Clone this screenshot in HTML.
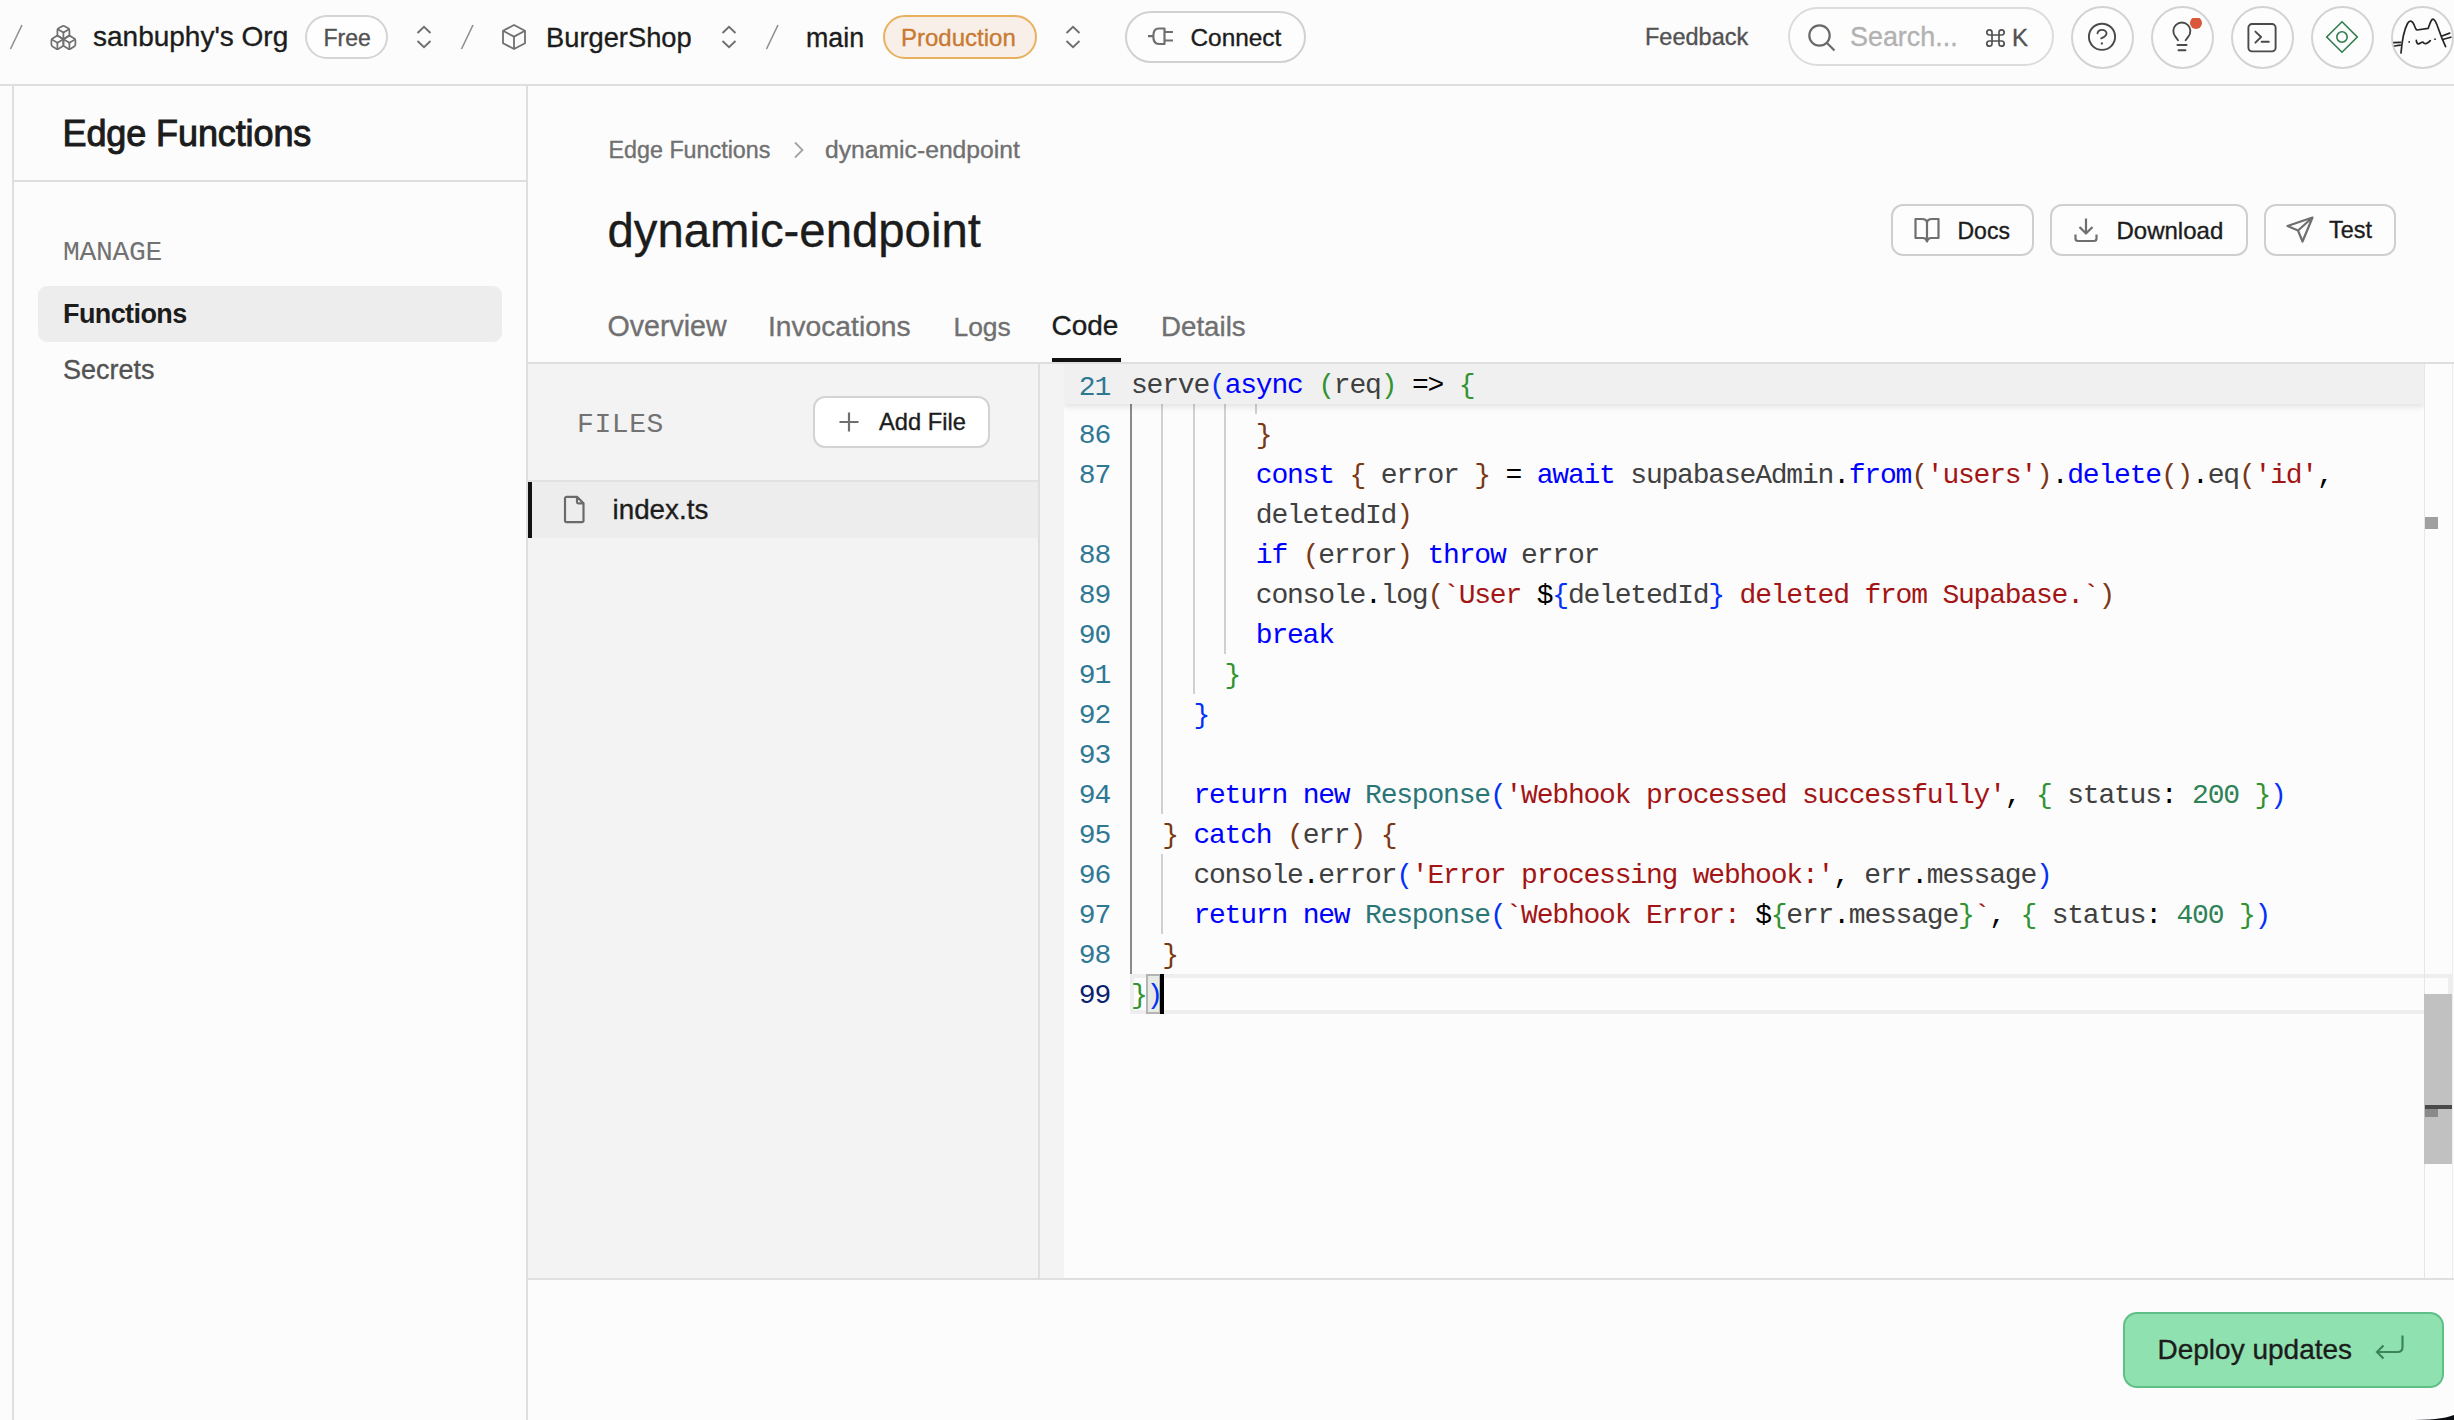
<!DOCTYPE html>
<html><head><meta charset="utf-8"><title>Edge Functions - dynamic-endpoint</title>
<style>html,body{margin:0;padding:0;}body{width:2454px;height:1420px;position:relative;overflow:hidden;background:#fcfcfc;font-family:'Liberation Sans', sans-serif;}</style>
</head><body>
<div style="position:absolute;left:0px;top:84px;width:2454px;height:2px;box-sizing:border-box;background:#dfdfdf"></div>
<svg style="position:absolute;left:8px;top:24px" width="16" height="26" viewBox="0 0 16 26" fill="none"><line x1="2.5" y1="25" x2="14" y2="1" stroke="#8f8f8f" stroke-width="1.6"/></svg>
<svg style="position:absolute;left:48.6px;top:22.5px" width="28.8" height="28.8" viewBox="0 0 24 24" fill="none" stroke="#6f6f6f" stroke-width="1.45" stroke-linecap="round" stroke-linejoin="round"><path d="M2.97 12.92A2 2 0 0 0 2 14.63v3.24a2 2 0 0 0 .97 1.71l3 1.8a2 2 0 0 0 2.06 0L12 19v-5.5l-5-3-4.03 2.42Z"/><path d="m7 16.5-4.74-2.85"/><path d="m7 16.5 5-3"/><path d="M7 16.5v5.17"/><path d="M12 13.5V19l3.97 2.38a2 2 0 0 0 2.06 0l3-1.8a2 2 0 0 0 .97-1.71v-3.24a2 2 0 0 0-.97-1.71L17 10.5l-5 3Z"/><path d="m17 16.5-5-3"/><path d="m17 16.5 4.74-2.85"/><path d="M17 16.5v5.17"/><path d="M7.97 4.42A2 2 0 0 0 7 6.13v4.37l5 3 5-3V6.13a2 2 0 0 0-.97-1.71l-3-1.8a2 2 0 0 0-2.06 0l-3 1.8Z"/><path d="M12 8 7.26 5.15"/><path d="m12 8 4.74-2.85"/><path d="M12 13.5V8"/></svg>
<div style="position:absolute;left:93px;top:22.99px;font-family:'Liberation Sans', sans-serif;font-size:28px;line-height:28px;font-weight:400;color:#1c1c1c;letter-spacing:0px;white-space:pre;-webkit-text-stroke:0.35px #1c1c1c;">sanbuphy&#x27;s Org</div>
<div style="position:absolute;left:305px;top:15px;width:83px;height:44px;box-sizing:border-box;border:2px solid #d4d4d4;border-radius:22px;background:#fefefe"></div>
<div style="position:absolute;left:323.5px;top:26.53px;font-family:'Liberation Sans', sans-serif;font-size:23px;line-height:23px;font-weight:400;color:#525252;letter-spacing:0px;white-space:pre;-webkit-text-stroke:0.35px #525252;">Free</div>
<svg style="position:absolute;left:415px;top:25px" width="18" height="24" viewBox="0 0 18 24" fill="none"><path d="M2.5 8 L9 1.8 L15.5 8 M2.5 16 L9 22.2 L15.5 16" stroke="#6f6f6f" stroke-width="1.9" fill="none"/></svg>
<svg style="position:absolute;left:457px;top:24px" width="20" height="26" viewBox="0 0 20 26" fill="none"><line x1="4.5" y1="25" x2="16" y2="1" stroke="#8f8f8f" stroke-width="1.6"/></svg>
<svg style="position:absolute;left:500px;top:23px" width="28" height="28" viewBox="0 0 28 28" fill="none"><path d="M14 2 L25 7.8 L25 20.2 L14 26 L3 20.2 L3 7.8 Z M3 7.8 L14 13.6 L25 7.8 M14 13.6 L14 26" stroke="#707070" stroke-width="1.8" stroke-linejoin="round"/></svg>
<div style="position:absolute;left:546px;top:24.09px;font-family:'Liberation Sans', sans-serif;font-size:27.3px;line-height:27.3px;font-weight:400;color:#1c1c1c;letter-spacing:0px;white-space:pre;-webkit-text-stroke:0.35px #1c1c1c;">BurgerShop</div>
<svg style="position:absolute;left:720px;top:25px" width="18" height="24" viewBox="0 0 18 24" fill="none"><path d="M2.5 8 L9 1.8 L15.5 8 M2.5 16 L9 22.2 L15.5 16" stroke="#6f6f6f" stroke-width="1.9" fill="none"/></svg>
<svg style="position:absolute;left:762px;top:24px" width="20" height="26" viewBox="0 0 20 26" fill="none"><line x1="4.5" y1="25" x2="16" y2="1" stroke="#8f8f8f" stroke-width="1.6"/></svg>
<div style="position:absolute;left:806px;top:24.51px;font-family:'Liberation Sans', sans-serif;font-size:26.8px;line-height:26.8px;font-weight:400;color:#1c1c1c;letter-spacing:0px;white-space:pre;-webkit-text-stroke:0.35px #1c1c1c;">main</div>
<div style="position:absolute;left:883px;top:15px;width:154px;height:44px;box-sizing:border-box;border:2px solid #e9b15f;border-radius:22px;background:#f8efe8"></div>
<div style="position:absolute;left:901px;top:25.68px;font-family:'Liberation Sans', sans-serif;font-size:24px;line-height:24px;font-weight:400;color:#c87a32;letter-spacing:0px;white-space:pre;-webkit-text-stroke:0.35px #c87a32;">Production</div>
<svg style="position:absolute;left:1064px;top:25px" width="18" height="24" viewBox="0 0 18 24" fill="none"><path d="M2.5 8 L9 1.8 L15.5 8 M2.5 16 L9 22.2 L15.5 16" stroke="#6f6f6f" stroke-width="1.9" fill="none"/></svg>
<div style="position:absolute;left:1125px;top:11px;width:181px;height:52px;box-sizing:border-box;border:2px solid #d1d1d1;border-radius:26px;background:#fdfdfd"></div>
<svg style="position:absolute;left:1146px;top:27px" width="30" height="20" viewBox="0 0 30 20" fill="none"><path d="M2 9.2 H7 M7.3 9.2 C7.3 4 9 1.5 13 1.5 H18.5 V17 H13 C9 17 7.3 14.5 7.3 9.2 Z M18.5 5 H27 M18.5 13.5 H27" stroke="#6f6f6f" stroke-width="2.2" stroke-linejoin="round"/></svg>
<div style="position:absolute;left:1190.5px;top:25.54px;font-family:'Liberation Sans', sans-serif;font-size:24.4px;line-height:24.4px;font-weight:400;color:#1c1c1c;letter-spacing:0px;white-space:pre;-webkit-text-stroke:0.35px #1c1c1c;">Connect</div>
<div style="position:absolute;left:1645px;top:26.40px;font-family:'Liberation Sans', sans-serif;font-size:23.5px;line-height:23.5px;font-weight:400;color:#525252;letter-spacing:0px;white-space:pre;-webkit-text-stroke:0.35px #525252;">Feedback</div>
<div style="position:absolute;left:1788px;top:7px;width:266px;height:59px;box-sizing:border-box;border:2px solid #dcdcdc;border-radius:30px;background:#fdfdfd"></div>
<svg style="position:absolute;left:1806px;top:22px" width="32" height="30" viewBox="0 0 32 30" fill="none"><circle cx="13.5" cy="13.5" r="10.2" stroke="#6a6a6a" stroke-width="2.2"/><line x1="21" y1="21" x2="28.5" y2="28.5" stroke="#6a6a6a" stroke-width="2.2"/></svg>
<div style="position:absolute;left:1850px;top:24.22px;font-family:'Liberation Sans', sans-serif;font-size:26.9px;line-height:26.9px;font-weight:400;color:#b2b2b2;letter-spacing:0px;white-space:pre;-webkit-text-stroke:0.35px #b2b2b2;">Search...</div>
<svg style="position:absolute;left:1985px;top:28px" width="22" height="20" viewBox="0 0 22 20" fill="none"><path d="M7 7 V4.3 A2.6 2.6 0 1 0 4.3 7 H16.7 A2.6 2.6 0 1 0 14 4.3 V15.7 A2.6 2.6 0 1 0 16.7 13 H4.3 A2.6 2.6 0 1 0 7 15.7 Z" stroke="#525252" stroke-width="1.7" fill="none"/></svg>
<div style="position:absolute;left:2012px;top:25.98px;font-family:'Liberation Sans', sans-serif;font-size:24px;line-height:24px;font-weight:400;color:#525252;letter-spacing:0px;white-space:pre;-webkit-text-stroke:0.35px #525252;">K</div>
<div style="position:absolute;left:2070.5px;top:5.5px;width:63px;height:63px;box-sizing:border-box;border:2px solid #d3d3d3;border-radius:50%;background:#fdfdfd"></div>
<div style="position:absolute;left:2150.5px;top:5.5px;width:63px;height:63px;box-sizing:border-box;border:2px solid #d3d3d3;border-radius:50%;background:#fdfdfd"></div>
<div style="position:absolute;left:2230.5px;top:5.5px;width:63px;height:63px;box-sizing:border-box;border:2px solid #d3d3d3;border-radius:50%;background:#fdfdfd"></div>
<div style="position:absolute;left:2310.5px;top:5.5px;width:63px;height:63px;box-sizing:border-box;border:2px solid #d3d3d3;border-radius:50%;background:#fdfdfd"></div>
<div style="position:absolute;left:2390.5px;top:5.5px;width:63px;height:63px;box-sizing:border-box;border:2px solid #d3d3d3;border-radius:50%;background:#fdfdfd"></div>
<svg style="position:absolute;left:2086px;top:21px" width="32" height="32" viewBox="0 0 32 32" fill="none"><circle cx="16" cy="15.8" r="13.1" stroke="#4a4a4a" stroke-width="1.9"/><path d="M11.5 12.4 C11.9 10.1 13.7 8.9 16 8.9 C18.6 8.9 20.5 10.5 20.5 12.6 C20.5 15 17.9 16.3 15.2 17.3" stroke="#4a4a4a" stroke-width="1.9" stroke-linecap="round"/><circle cx="15.9" cy="22.5" r="1.15" fill="#4a4a4a"/></svg>
<svg style="position:absolute;left:2168px;top:18px" width="40" height="36" viewBox="0 0 40 36" fill="none"><path d="M10 22.2 L7.4 18.6 A8.5 8.5 0 1 1 20.3 18.6 L17.6 22.2" stroke="#4a4a4a" stroke-width="1.9" fill="none" stroke-linecap="round"/><path d="M9.4 27 H18.6 M10.5 32.3 H17.5" stroke="#4a4a4a" stroke-width="1.9" stroke-linecap="round"/><circle cx="28" cy="5" r="6" fill="#d9573a"/></svg>
<svg style="position:absolute;left:2246px;top:21px" width="32" height="32" viewBox="0 0 32 32" fill="none"><rect x="2.4" y="3" width="27.2" height="27.4" rx="3.6" stroke="#4a4a4a" stroke-width="1.9"/><path d="M9.4 10.6 L15.1 16 L9.4 21.7" stroke="#4a4a4a" stroke-width="1.9" stroke-linecap="round" stroke-linejoin="round"/><path d="M15.6 20.8 H22.8" stroke="#4a4a4a" stroke-width="1.9" stroke-linecap="round"/></svg>
<svg style="position:absolute;left:2324px;top:19px" width="36" height="36" viewBox="0 0 36 36" fill="none"><path d="M18 2.8 L33.3 18 L18 33.2 L2.7 18 Z" stroke="#2f7d4d" stroke-width="1.6"/><circle cx="18" cy="18" r="5.2" stroke="#2f7d4d" stroke-width="1.6"/></svg>
<div style="position:absolute;left:2390px;top:5.5px;width:63px;height:63px;border-radius:50%;overflow:hidden">
<svg width="63" height="63" viewBox="0 0 63 63" style="position:absolute;left:0;top:0" fill="none" stroke="#262626" stroke-width="1.7" stroke-linecap="round" stroke-linejoin="round"><path d="M11 47 C11.8 37 13.5 25 17.5 17.5 C19.5 14 22 14.5 24 18.5 C25 21 25.5 23.5 27 24 L38.2 22.4 C39.5 19 40.5 14.5 42.5 13.2 C44.5 12.5 46.5 17 48.5 23 C50.5 29 53 35 55.6 40.6"/><path d="M3.9 36.6 L10.4 36.3 M4.6 40 L10.2 39.2 M52 30 L59.7 27.1 M52.6 33.5 L60.8 31.2"/><path d="M26.3 34.3 C26.5 36.5 27.3 38.2 28.5 37.9 C30.2 37.3 31.5 36 32.8 36 C33.8 37.5 35 38 36.3 37.5 C38 36.8 39.5 35.6 40.3 34.6"/><circle cx="19.2" cy="35.9" r="0.9" fill="#262626" stroke="none"/><circle cx="45" cy="33.2" r="0.9" fill="#262626" stroke="none"/></svg>
</div>
<div style="position:absolute;left:12px;top:86px;width:2px;height:1334px;box-sizing:border-box;background:#dfdfdf"></div>
<div style="position:absolute;left:526px;top:86px;width:2px;height:1334px;box-sizing:border-box;background:#dfdfdf"></div>
<div style="position:absolute;left:14px;top:180px;width:512px;height:2px;box-sizing:border-box;background:#dfdfdf"></div>
<div style="position:absolute;left:62.5px;top:115.52px;font-family:'Liberation Sans', sans-serif;font-size:36px;line-height:36px;font-weight:400;color:#1c1c1c;letter-spacing:-0.1px;white-space:pre;-webkit-text-stroke:1.0px #1c1c1c">Edge Functions</div>
<div style="position:absolute;left:63px;top:238.55px;font-family:'Liberation Mono', monospace;font-size:28px;line-height:28px;font-weight:400;color:#727272;letter-spacing:-0.3px;white-space:pre;">MANAGE</div>
<div style="position:absolute;left:38px;top:286px;width:464px;height:56px;box-sizing:border-box;background:#ededed;border-radius:9px"></div>
<div style="position:absolute;left:63px;top:300.64px;font-family:'Liberation Sans', sans-serif;font-size:27px;line-height:27px;font-weight:700;color:#1c1c1c;letter-spacing:-0.6px;white-space:pre;">Functions</div>
<div style="position:absolute;left:63px;top:357.14px;font-family:'Liberation Sans', sans-serif;font-size:27px;line-height:27px;font-weight:400;color:#525252;letter-spacing:0px;white-space:pre;-webkit-text-stroke:0.35px #525252;">Secrets</div>
<div style="position:absolute;left:608.5px;top:139.27px;font-family:'Liberation Sans', sans-serif;font-size:23.3px;line-height:23.3px;font-weight:400;color:#707070;letter-spacing:0px;white-space:pre;-webkit-text-stroke:0.35px #707070;">Edge Functions</div>
<svg style="position:absolute;left:790px;top:140px" width="18" height="20" viewBox="0 0 18 20" fill="none"><path d="M5 2.5 L12.5 10 L5 17.5" stroke="#a3a3a3" stroke-width="1.8" fill="none"/></svg>
<div style="position:absolute;left:825px;top:138.09px;font-family:'Liberation Sans', sans-serif;font-size:24.7px;line-height:24.7px;font-weight:400;color:#707070;letter-spacing:0px;white-space:pre;-webkit-text-stroke:0.35px #707070;">dynamic-endpoint</div>
<div style="position:absolute;left:607.5px;top:207.45px;font-family:'Liberation Sans', sans-serif;font-size:47.3px;line-height:47.3px;font-weight:400;color:#1c1c1c;letter-spacing:0px;white-space:pre;-webkit-text-stroke:0.35px #1c1c1c;">dynamic-endpoint</div>
<div style="position:absolute;left:1891px;top:204px;width:143px;height:52px;box-sizing:border-box;border:2px solid #cfcfcf;border-radius:12px;background:#fdfdfd"></div>
<svg style="position:absolute;left:1913px;top:216px" width="30" height="28" viewBox="0 0 30 28" fill="none"><path d="M2.5 3 H9 C11.5 3 13.7 4.5 14 6.5 C14.3 4.5 16.5 3 19 3 H25.5 V22 H18 C16 22 14.5 23 14 25.5 C13.5 23 12 22 10 22 H2.5 Z M14 6.5 V25" stroke="#6f6f6f" stroke-width="2.2" stroke-linejoin="round"/></svg>
<div style="position:absolute;left:1957.5px;top:219.53px;font-family:'Liberation Sans', sans-serif;font-size:23px;line-height:23px;font-weight:400;color:#1c1c1c;letter-spacing:0px;white-space:pre;-webkit-text-stroke:0.35px #1c1c1c;">Docs</div>
<div style="position:absolute;left:2050px;top:204px;width:198px;height:52px;box-sizing:border-box;border:2px solid #cfcfcf;border-radius:12px;background:#fdfdfd"></div>
<svg style="position:absolute;left:2072px;top:216px" width="28" height="28" viewBox="0 0 28 28" fill="none"><path d="M14 2.5 V17.5 M7.5 11 L14 17.5 L20.5 11 M3.5 18.5 V22.5 C3.5 24 4.5 25 6 25 H22 C23.5 25 24.5 24 24.5 22.5 V18.5" stroke="#6f6f6f" stroke-width="2.2" stroke-linejoin="round"/></svg>
<div style="position:absolute;left:2116.5px;top:218.78px;font-family:'Liberation Sans', sans-serif;font-size:24px;line-height:24px;font-weight:400;color:#1c1c1c;letter-spacing:0px;white-space:pre;-webkit-text-stroke:0.35px #1c1c1c;">Download</div>
<div style="position:absolute;left:2264px;top:204px;width:132px;height:52px;box-sizing:border-box;border:2px solid #cfcfcf;border-radius:12px;background:#fdfdfd"></div>
<svg style="position:absolute;left:2285px;top:215px" width="30" height="30" viewBox="0 0 30 30" fill="none"><path d="M27.5 2.5 L2.5 11 L13 15.5 L17.5 26.5 Z M13 15.5 L27.5 2.5" stroke="#6f6f6f" stroke-width="2.2" stroke-linejoin="round"/></svg>
<div style="position:absolute;left:2329px;top:219.29px;font-family:'Liberation Sans', sans-serif;font-size:23.4px;line-height:23.4px;font-weight:400;color:#1c1c1c;letter-spacing:0px;white-space:pre;-webkit-text-stroke:0.35px #1c1c1c;">Test</div>
<div style="position:absolute;left:607.5px;top:311.78px;font-family:'Liberation Sans', sans-serif;font-size:28.6px;line-height:28.6px;font-weight:400;color:#707070;letter-spacing:0px;white-space:pre;-webkit-text-stroke:0.35px #707070;">Overview</div>
<div style="position:absolute;left:768px;top:312.12px;font-family:'Liberation Sans', sans-serif;font-size:28.2px;line-height:28.2px;font-weight:400;color:#707070;letter-spacing:0px;white-space:pre;-webkit-text-stroke:0.35px #707070;">Invocations</div>
<div style="position:absolute;left:953.5px;top:313.65px;font-family:'Liberation Sans', sans-serif;font-size:26.4px;line-height:26.4px;font-weight:400;color:#707070;letter-spacing:0px;white-space:pre;-webkit-text-stroke:0.35px #707070;">Logs</div>
<div style="position:absolute;left:1051.5px;top:312.29px;font-family:'Liberation Sans', sans-serif;font-size:28px;line-height:28px;font-weight:400;color:#1c1c1c;letter-spacing:0px;white-space:pre;-webkit-text-stroke:0.35px #1c1c1c;">Code</div>
<div style="position:absolute;left:1161px;top:312.55px;font-family:'Liberation Sans', sans-serif;font-size:27.7px;line-height:27.7px;font-weight:400;color:#707070;letter-spacing:0px;white-space:pre;-webkit-text-stroke:0.35px #707070;">Details</div>
<div style="position:absolute;left:528px;top:362px;width:1926px;height:2px;box-sizing:border-box;background:#dfdfdf"></div>
<div style="position:absolute;left:1052px;top:358px;width:69px;height:4px;box-sizing:border-box;background:#121212"></div>
<div style="position:absolute;left:528px;top:364px;width:510px;height:914px;box-sizing:border-box;background:#f3f3f3"></div>
<div style="position:absolute;left:1038px;top:364px;width:2px;height:914px;box-sizing:border-box;background:#dfdfdf"></div>
<div style="position:absolute;left:577px;top:410.95px;font-family:'Liberation Mono', monospace;font-size:28px;line-height:28px;font-weight:400;color:#727272;letter-spacing:0.6px;white-space:pre;">FILES</div>
<div style="position:absolute;left:813px;top:396px;width:177px;height:52px;box-sizing:border-box;border:2px solid #d3d3d3;border-radius:12px;background:#ffffff"></div>
<svg style="position:absolute;left:837px;top:410px" width="24" height="24" viewBox="0 0 24 24" fill="none"><path d="M12 2.5 V21.5 M2.5 12 H21.5" stroke="#6f6f6f" stroke-width="2.2"/></svg>
<div style="position:absolute;left:879px;top:411.13px;font-family:'Liberation Sans', sans-serif;font-size:23.7px;line-height:23.7px;font-weight:400;color:#1c1c1c;letter-spacing:0px;white-space:pre;-webkit-text-stroke:0.35px #1c1c1c;">Add File</div>
<div style="position:absolute;left:528px;top:480px;width:510px;height:2px;box-sizing:border-box;background:#e2e2e2"></div>
<div style="position:absolute;left:528px;top:482px;width:510px;height:56px;box-sizing:border-box;background:#ededed"></div>
<div style="position:absolute;left:528px;top:482px;width:4px;height:56px;box-sizing:border-box;background:#121212"></div>
<svg style="position:absolute;left:560px;top:494px" width="28" height="32" viewBox="0 0 28 32" fill="none"><path d="M5 4.5 C5 3.5 5.8 2.8 6.8 2.8 H17 L23.5 9.3 V26.5 C23.5 27.5 22.7 28.2 21.7 28.2 H6.8 C5.8 28.2 5 27.5 5 26.5 Z M17 2.8 V8 C17 8.8 17.6 9.3 18.3 9.3 H23.5" stroke="#6a6a6a" stroke-width="2.2" stroke-linejoin="round"/></svg>
<div style="position:absolute;left:612.5px;top:496.36px;font-family:'Liberation Sans', sans-serif;font-size:27.8px;line-height:27.8px;font-weight:400;color:#1c1c1c;letter-spacing:0px;white-space:pre;-webkit-text-stroke:0.35px #1c1c1c;">index.ts</div>
<div style="position:absolute;left:1040px;top:364px;width:24px;height:914px;box-sizing:border-box;background:#f3f3f3"></div>
<div style="position:absolute;left:1064px;top:364px;width:1390px;height:914px;box-sizing:border-box;background:#fcfcfc"></div>
<div style="position:absolute;left:1130px;top:404px;width:2px;height:570px;box-sizing:border-box;background:#8a8a8a"></div>
<div style="position:absolute;left:1161px;top:404px;width:2px;height:410px;box-sizing:border-box;background:#d0d0d0"></div>
<div style="position:absolute;left:1161px;top:854px;width:2px;height:80px;box-sizing:border-box;background:#d0d0d0"></div>
<div style="position:absolute;left:1193px;top:404px;width:2px;height:290px;box-sizing:border-box;background:#d0d0d0"></div>
<div style="position:absolute;left:1224px;top:404px;width:2px;height:250px;box-sizing:border-box;background:#d0d0d0"></div>
<div style="position:absolute;left:1255px;top:404px;width:2px;height:10px;box-sizing:border-box;background:#d0d0d0"></div>
<div style="position:absolute;left:1130px;top:974px;width:1322px;height:40px;box-sizing:border-box;border:4px solid #eeeeee"></div>
<div style="position:absolute;left:1146px;top:974px;width:15px;height:40px;box-sizing:border-box;border:2px solid #b4b4b4;background:#e7ebe3"></div>
<div style="position:absolute;left:1160px;top:974px;width:4px;height:40px;box-sizing:border-box;background:#000"></div>
<div style="position:absolute;left:1064px;width:46px;text-align:right;top:421.95px;font-family:'Liberation Mono', monospace;font-size:28px;line-height:28px;letter-spacing:-1.2px;white-space:pre;color:#2f7894">86</div>
<div style="position:absolute;left:1255.8px;top:421.95px;font-family:'Liberation Mono', monospace;font-size:28px;line-height:28px;letter-spacing:-1.2px;white-space:pre;color:#404040;"><span style="color:#7b3814">}</span></div>
<div style="position:absolute;left:1064px;width:46px;text-align:right;top:461.95px;font-family:'Liberation Mono', monospace;font-size:28px;line-height:28px;letter-spacing:-1.2px;white-space:pre;color:#2f7894">87</div>
<div style="position:absolute;left:1255.8px;top:461.95px;font-family:'Liberation Mono', monospace;font-size:28px;line-height:28px;letter-spacing:-1.2px;white-space:pre;color:#404040;"><span style="color:#0000ff">const</span><span style="color:#404040"> </span><span style="color:#7b3814">{</span><span style="color:#404040"> error </span><span style="color:#7b3814">}</span><span style="color:#000000"> = </span><span style="color:#0000ff">await</span><span style="color:#404040"> supabaseAdmin</span><span style="color:#000000">.</span><span style="color:#0000ff">from</span><span style="color:#7b3814">(</span><span style="color:#a31515">&#x27;users&#x27;</span><span style="color:#7b3814">)</span><span style="color:#000000">.</span><span style="color:#0000ff">delete</span><span style="color:#7b3814">()</span><span style="color:#000000">.</span><span style="color:#404040">eq</span><span style="color:#7b3814">(</span><span style="color:#a31515">&#x27;id&#x27;</span><span style="color:#000000">,</span></div>
<div style="position:absolute;left:1255.8px;top:501.95px;font-family:'Liberation Mono', monospace;font-size:28px;line-height:28px;letter-spacing:-1.2px;white-space:pre;color:#404040;"><span style="color:#404040">deletedId</span><span style="color:#7b3814">)</span></div>
<div style="position:absolute;left:1064px;width:46px;text-align:right;top:541.95px;font-family:'Liberation Mono', monospace;font-size:28px;line-height:28px;letter-spacing:-1.2px;white-space:pre;color:#2f7894">88</div>
<div style="position:absolute;left:1255.8px;top:541.95px;font-family:'Liberation Mono', monospace;font-size:28px;line-height:28px;letter-spacing:-1.2px;white-space:pre;color:#404040;"><span style="color:#0000ff">if</span><span style="color:#404040"> </span><span style="color:#7b3814">(</span><span style="color:#404040">error</span><span style="color:#7b3814">)</span><span style="color:#404040"> </span><span style="color:#0000ff">throw</span><span style="color:#404040"> error</span></div>
<div style="position:absolute;left:1064px;width:46px;text-align:right;top:581.95px;font-family:'Liberation Mono', monospace;font-size:28px;line-height:28px;letter-spacing:-1.2px;white-space:pre;color:#2f7894">89</div>
<div style="position:absolute;left:1255.8px;top:581.95px;font-family:'Liberation Mono', monospace;font-size:28px;line-height:28px;letter-spacing:-1.2px;white-space:pre;color:#404040;"><span style="color:#404040">console</span><span style="color:#000000">.</span><span style="color:#404040">log</span><span style="color:#7b3814">(</span><span style="color:#a31515">`User </span><span style="color:#000000">$</span><span style="color:#0431fa">{</span><span style="color:#404040">deletedId</span><span style="color:#0431fa">}</span><span style="color:#a31515"> deleted from Supabase.`</span><span style="color:#7b3814">)</span></div>
<div style="position:absolute;left:1064px;width:46px;text-align:right;top:621.95px;font-family:'Liberation Mono', monospace;font-size:28px;line-height:28px;letter-spacing:-1.2px;white-space:pre;color:#2f7894">90</div>
<div style="position:absolute;left:1255.8px;top:621.95px;font-family:'Liberation Mono', monospace;font-size:28px;line-height:28px;letter-spacing:-1.2px;white-space:pre;color:#404040;"><span style="color:#0000ff">break</span></div>
<div style="position:absolute;left:1064px;width:46px;text-align:right;top:661.95px;font-family:'Liberation Mono', monospace;font-size:28px;line-height:28px;letter-spacing:-1.2px;white-space:pre;color:#2f7894">91</div>
<div style="position:absolute;left:1224.6px;top:661.95px;font-family:'Liberation Mono', monospace;font-size:28px;line-height:28px;letter-spacing:-1.2px;white-space:pre;color:#404040;"><span style="color:#319331">}</span></div>
<div style="position:absolute;left:1064px;width:46px;text-align:right;top:701.95px;font-family:'Liberation Mono', monospace;font-size:28px;line-height:28px;letter-spacing:-1.2px;white-space:pre;color:#2f7894">92</div>
<div style="position:absolute;left:1193.4px;top:701.95px;font-family:'Liberation Mono', monospace;font-size:28px;line-height:28px;letter-spacing:-1.2px;white-space:pre;color:#404040;"><span style="color:#0431fa">}</span></div>
<div style="position:absolute;left:1064px;width:46px;text-align:right;top:741.95px;font-family:'Liberation Mono', monospace;font-size:28px;line-height:28px;letter-spacing:-1.2px;white-space:pre;color:#2f7894">93</div>
<div style="position:absolute;left:1064px;width:46px;text-align:right;top:781.95px;font-family:'Liberation Mono', monospace;font-size:28px;line-height:28px;letter-spacing:-1.2px;white-space:pre;color:#2f7894">94</div>
<div style="position:absolute;left:1193.4px;top:781.95px;font-family:'Liberation Mono', monospace;font-size:28px;line-height:28px;letter-spacing:-1.2px;white-space:pre;color:#404040;"><span style="color:#0000ff">return</span><span style="color:#404040"> </span><span style="color:#0000ff">new</span><span style="color:#404040"> </span><span style="color:#2a7676">Response</span><span style="color:#0431fa">(</span><span style="color:#a31515">&#x27;Webhook processed successfully&#x27;</span><span style="color:#000000">, </span><span style="color:#319331">{</span><span style="color:#404040"> status</span><span style="color:#000000">: </span><span style="color:#2f8256">200</span><span style="color:#404040"> </span><span style="color:#319331">}</span><span style="color:#0431fa">)</span></div>
<div style="position:absolute;left:1064px;width:46px;text-align:right;top:821.95px;font-family:'Liberation Mono', monospace;font-size:28px;line-height:28px;letter-spacing:-1.2px;white-space:pre;color:#2f7894">95</div>
<div style="position:absolute;left:1162.2px;top:821.95px;font-family:'Liberation Mono', monospace;font-size:28px;line-height:28px;letter-spacing:-1.2px;white-space:pre;color:#404040;"><span style="color:#7b3814">}</span><span style="color:#404040"> </span><span style="color:#0000ff">catch</span><span style="color:#404040"> </span><span style="color:#7b3814">(</span><span style="color:#404040">err</span><span style="color:#7b3814">)</span><span style="color:#404040"> </span><span style="color:#7b3814">{</span></div>
<div style="position:absolute;left:1064px;width:46px;text-align:right;top:861.95px;font-family:'Liberation Mono', monospace;font-size:28px;line-height:28px;letter-spacing:-1.2px;white-space:pre;color:#2f7894">96</div>
<div style="position:absolute;left:1193.4px;top:861.95px;font-family:'Liberation Mono', monospace;font-size:28px;line-height:28px;letter-spacing:-1.2px;white-space:pre;color:#404040;"><span style="color:#404040">console</span><span style="color:#000000">.</span><span style="color:#404040">error</span><span style="color:#0431fa">(</span><span style="color:#a31515">&#x27;Error processing webhook:&#x27;</span><span style="color:#000000">, </span><span style="color:#404040">err</span><span style="color:#000000">.</span><span style="color:#404040">message</span><span style="color:#0431fa">)</span></div>
<div style="position:absolute;left:1064px;width:46px;text-align:right;top:901.95px;font-family:'Liberation Mono', monospace;font-size:28px;line-height:28px;letter-spacing:-1.2px;white-space:pre;color:#2f7894">97</div>
<div style="position:absolute;left:1193.4px;top:901.95px;font-family:'Liberation Mono', monospace;font-size:28px;line-height:28px;letter-spacing:-1.2px;white-space:pre;color:#404040;"><span style="color:#0000ff">return</span><span style="color:#404040"> </span><span style="color:#0000ff">new</span><span style="color:#404040"> </span><span style="color:#2a7676">Response</span><span style="color:#0431fa">(</span><span style="color:#a31515">`Webhook Error: </span><span style="color:#000000">$</span><span style="color:#319331">{</span><span style="color:#404040">err</span><span style="color:#000000">.</span><span style="color:#404040">message</span><span style="color:#319331">}</span><span style="color:#a31515">`</span><span style="color:#000000">, </span><span style="color:#319331">{</span><span style="color:#404040"> status</span><span style="color:#000000">: </span><span style="color:#2f8256">400</span><span style="color:#404040"> </span><span style="color:#319331">}</span><span style="color:#0431fa">)</span></div>
<div style="position:absolute;left:1064px;width:46px;text-align:right;top:941.95px;font-family:'Liberation Mono', monospace;font-size:28px;line-height:28px;letter-spacing:-1.2px;white-space:pre;color:#2f7894">98</div>
<div style="position:absolute;left:1162.2px;top:941.95px;font-family:'Liberation Mono', monospace;font-size:28px;line-height:28px;letter-spacing:-1.2px;white-space:pre;color:#404040;"><span style="color:#7b3814">}</span></div>
<div style="position:absolute;left:1064px;width:46px;text-align:right;top:981.95px;font-family:'Liberation Mono', monospace;font-size:28px;line-height:28px;letter-spacing:-1.2px;white-space:pre;color:#0b216f">99</div>
<div style="position:absolute;left:1131.0px;top:981.95px;font-family:'Liberation Mono', monospace;font-size:28px;line-height:28px;letter-spacing:-1.2px;white-space:pre;color:#404040;"><span style="color:#319331">}</span><span style="color:#0431fa">)</span></div>
<div style="position:absolute;left:1064px;top:364px;width:1360px;height:60px;overflow:hidden"><div style="position:absolute;left:0;top:0;width:1360px;height:40px;background:#f0f0f0;box-shadow:0 3px 6px rgba(0,0,0,0.10)"></div></div>
<div style="position:absolute;left:1064px;width:46px;text-align:right;top:374.25px;font-family:'Liberation Mono', monospace;font-size:28px;line-height:28px;letter-spacing:-1.2px;white-space:pre;color:#2f7894">21</div>
<div style="position:absolute;left:1131px;top:371.55px;font-family:'Liberation Mono', monospace;font-size:28px;line-height:28px;letter-spacing:-1.2px;white-space:pre;color:#404040;"><span style="color:#404040">serve</span><span style="color:#0431fa">(</span><span style="color:#0000ff">async</span><span style="color:#404040"> </span><span style="color:#319331">(</span><span style="color:#404040">req</span><span style="color:#319331">)</span><span style="color:#000000"> =&gt; </span><span style="color:#319331">{</span></div>
<div style="position:absolute;left:2424px;top:364px;width:1px;height:914px;box-sizing:border-box;background:#e6e6e6"></div>
<div style="position:absolute;left:2452px;top:364px;width:1px;height:914px;box-sizing:border-box;background:#ececec"></div>
<div style="position:absolute;left:2425px;top:517px;width:13px;height:12px;box-sizing:border-box;background:#a0a0a0"></div>
<div style="position:absolute;left:2424px;top:994px;width:28px;height:170px;box-sizing:border-box;background:#c1c1c1"></div>
<div style="position:absolute;left:2425px;top:1105px;width:27px;height:4px;box-sizing:border-box;background:#4a4a4a"></div>
<div style="position:absolute;left:2425px;top:1109px;width:13px;height:8px;box-sizing:border-box;background:#8a8a8a"></div>
<div style="position:absolute;left:528px;top:1278px;width:1926px;height:2px;box-sizing:border-box;background:#dfdfdf"></div>
<div style="position:absolute;left:2123px;top:1312px;width:321px;height:76px;box-sizing:border-box;border:2px solid #5fbf87;border-radius:14px;background:#8fe2b0"></div>
<div style="position:absolute;left:2157.5px;top:1335.79px;font-family:'Liberation Sans', sans-serif;font-size:28px;line-height:28px;font-weight:400;color:#1c1c1c;letter-spacing:0px;white-space:pre;-webkit-text-stroke:0.35px #1c1c1c;">Deploy updates</div>
<svg style="position:absolute;left:2372px;top:1333px" width="36" height="34" viewBox="0 0 36 34" fill="none"><path d="M30.5 2.5 V14 C30.5 17 28.5 19 25.5 19 H5 M11.5 12.5 L5 19 L11.5 25.5" stroke="#3b8559" stroke-width="2.2" fill="none"/></svg>
<svg style="position:absolute;left:2394px;top:1400px" width="60" height="20" viewBox="0 0 60 20" fill="none"><path d="M60 15 C50 19 36 20 12 20 L60 20 Z" fill="#0a0d12"/></svg>
</body></html>
